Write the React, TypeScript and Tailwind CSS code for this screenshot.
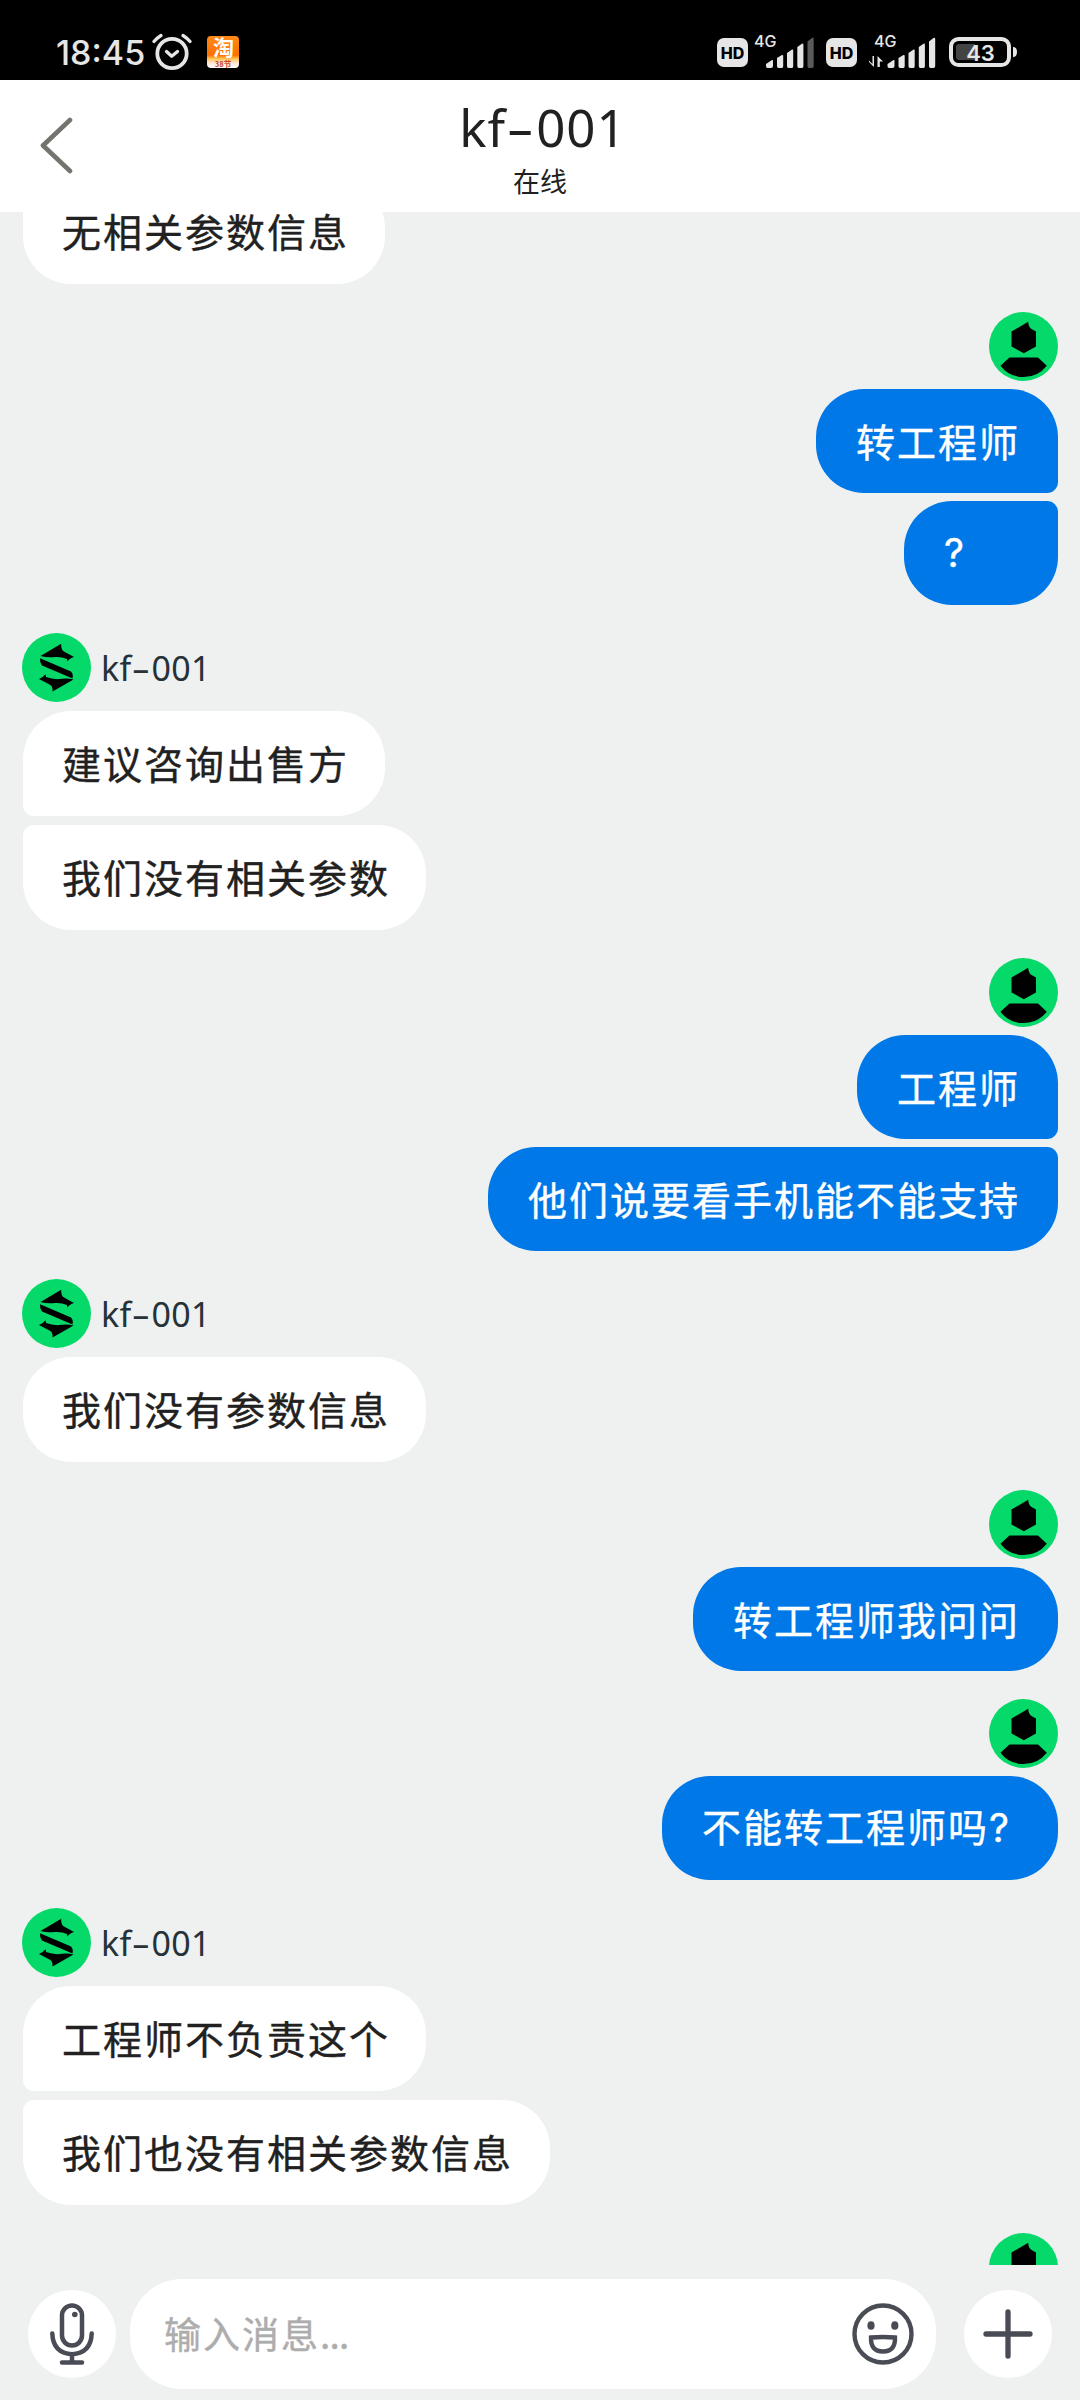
import React from 'react';

type Side = 'agent' | 'me';

interface Message {
  text: string;
  className: string;
}

interface Group {
  id: number;
  side: Side;
  hideHeader?: boolean;
  messages: Message[];
}

const groups: Group[] = [
  { id: 1, side: 'agent', hideHeader: true, messages: [{ text: '无相关参数信息', className: 'w-[362px] rounded-tl-[11px]' }] },
  {
    id: 2,
    side: 'me',
    messages: [
      { text: '转工程师', className: 'w-[242px] rounded-br-[11px]' },
      { text: '?', className: 'w-[154px] rounded-tr-[11px]' },
    ],
  },
  {
    id: 3,
    side: 'agent',
    messages: [
      { text: '建议咨询出售方', className: 'w-[362px] rounded-bl-[11px]' },
      { text: '我们没有相关参数', className: 'w-[403px] rounded-tl-[11px]' },
    ],
  },
  {
    id: 4,
    side: 'me',
    messages: [
      { text: '工程师', className: 'w-[201px] rounded-br-[11px]' },
      { text: '他们说要看手机能不能支持', className: 'w-[570px] rounded-tr-[11px]' },
    ],
  },
  { id: 5, side: 'agent', messages: [{ text: '我们没有参数信息', className: 'w-[403px]' }] },
  { id: 6, side: 'me', messages: [{ text: '转工程师我问问', className: 'w-[365px]' }] },
  { id: 7, side: 'me', messages: [{ text: '不能转工程师吗?', className: 'w-[396px]' }] },
  {
    id: 8,
    side: 'agent',
    messages: [
      { text: '工程师不负责这个', className: 'w-[403px] rounded-bl-[11px]' },
      { text: '我们也没有相关参数信息', className: 'w-[527px] rounded-tl-[11px]' },
    ],
  },
  { id: 9, side: 'me', messages: [] },
];

const AgentAvatar = () => (
  <svg width="69" height="69" viewBox="0 0 69 69" className="shrink-0">
    <circle cx="34.5" cy="34.5" r="34.5" fill="#04d969" />
    <path d="M18.500 23 L39.200 10.800 Q39 17 42 18.500 L52 24 Q47.500 25 45.500 28.500 L45 26 Q39 23.500 33 24 Q25 24.800 18.500 23Z" />
    <path d="M18 25.200 L49 38.500 Q51.500 41 50.500 45.500 L20 32.500 Q17.500 29 18 25.200Z" />
    <path d="M17 46 Q21 44.500 23.500 41.300 L24 44 Q32 47 40 45.800 Q46 45 51.500 46.500 L30.500 58.500 Q31 53 27.500 51.500Z" />
  </svg>
);

const MyAvatar = () => (
  <svg width="69" height="69" viewBox="0 0 69 69" className="shrink-0">
    <circle cx="34.5" cy="34.5" r="34.5" fill="#04d969" />
    <path d="M22.500 19.500 L39.200 9.800 Q39.300 15 42.500 17 L47 19.500 V34.500 L34.800 41.300 L22.500 34.500Z" />
    <path d="M20.500 45.500 H49 L57.800 53.700 Q49 65 34.500 65 Q20 65 11.500 53.700Z" />
  </svg>
);

const HdBadge = () => (
  <div className="w-[31px] h-[29px] rounded-[7px] bg-[#e6e6e6] text-black text-[16px] leading-none font-extrabold flex items-center justify-center">
    HD
  </div>
);

const Signal = ({ weak, data }: { weak?: boolean; data?: boolean }) => (
  <svg width="67" height="40" viewBox="0 -4 67 40" fill="#e6e6e6">
    <text x={data ? 5 : 0} y="12.500" fontSize="16" fontWeight="500" fontFamily="Inter, sans-serif">
      4G
    </text>
    {data && (
      <path d="M3.500 22 V30 L0 26.500 V28 L5 33 V22Z M8.500 33 V22 L14 27.500 H10.800 V33Z" />
    )}
    <g transform={data ? 'translate(18.5 0)' : 'translate(12 0)'}>
      <path d="M0 30 L6 26 Q7 25.500 7 27 V32 Q7 34 5 34 H1.500 Q0 34 0 32Z" />
      <path d="M11 24 L16 21 Q17.200 20.500 17.200 22 V32 Q17.200 34 16 34 H12.500 Q11 34 11 32Z" />
      <path d="M21 19 L26 15.500 Q27.200 15 27.200 16.500 V32 Q27.200 34 26 34 H22.500 Q21 34 21 32Z" />
      <path d="M31.300 13 L36 9.700 Q37.400 9 37.400 11 V32 Q37.400 34 36 34 H32.800 Q31.300 34 31.300 32Z" />
      <path d="M41.500 7.500 L46 4 Q47.700 3 47.700 5 V32 Q47.700 34 46 34 H43 Q41.500 34 41.500 32Z" fill={weak ? '#5a5a5a' : '#e6e6e6'} />
    </g>
  </svg>
);

const StatusBar = () => (
  <div className="h-20 bg-black flex items-start text-[#e6e6e6]">
    <div className="ml-[56px] mt-[34px] w-[95px] text-[34px] leading-[38px] font-medium font-['Inter'] whitespace-nowrap">
      18:45
    </div>
    <svg width="40" height="38" viewBox="0 0 40 38" className="mt-[33px] ml-px" fill="none" stroke="#e6e6e6" strokeLinecap="round" strokeLinejoin="round">
      <circle cx="20" cy="20.500" r="14.700" strokeWidth="3.800" />
      <path d="M14.500 18.500 L19.700 23.200 L25.500 18.500" strokeWidth="3.300" />
      <path d="M2 8.500 Q5 5 9 2.500 M31 2.500 Q35 5 38 8.500" strokeWidth="3.300" />
    </svg>
    <svg width="32" height="32" viewBox="0 0 32 32" className="mt-9 ml-[15px] rounded-[4px]">
      <defs>
        <linearGradient id="tao" x1="0" y1="0" x2="0" y2="1">
          <stop offset="0" stopColor="#ff8a18" />
          <stop offset="0.6" stopColor="#ff7000" />
          <stop offset="0.72" stopColor="#ffc85a" />
          <stop offset="0.85" stopColor="#ffe6dc" />
          <stop offset="1" stopColor="#ffffff" />
        </linearGradient>
      </defs>
      <rect width="32" height="32" fill="url(#tao)" />
      <text x="16.500" y="18.500" textAnchor="middle" fontSize="21" fontWeight="700" fill="#fff" fontFamily="Noto Sans CJK SC, sans-serif">淘</text>
      <text x="16" y="31" textAnchor="middle" fontSize="7.500" fontWeight="700" fill="#c8452b" fontFamily="Noto Sans CJK SC, sans-serif">38节</text>
    </svg>
    <div className="ml-auto mr-[63px] mt-[30px] flex items-start font-['Inter']">
      <div className="mt-2"><HdBadge /></div>
      <div className="ml-[6px] w-[61px]"><Signal weak /></div>
      <div className="ml-[11px] mt-2"><HdBadge /></div>
      <div className="ml-[12px] w-[67px]"><Signal data /></div>
      <div className="ml-[13px] mt-[7px]">
        <svg width="68" height="30" viewBox="0 0 68 30">
          <rect x="2" y="2" width="58" height="26" rx="7.500" fill="none" stroke="#e6e6e6" strokeWidth="4" />
          <path d="M10 7 H26 V23 H10 Q7 23 7 20 V10 Q7 7 10 7Z" fill="#444" />
          <path d="M64 10 Q68 10 68 15 Q68 20 64 20Z" fill="#e6e6e6" />
          <text x="31.500" y="23.500" textAnchor="middle" fontSize="22" fontWeight="600" fill="#e6e6e6" fontFamily="Inter, sans-serif">
            43
          </text>
        </svg>
      </div>
    </div>
  </div>
);

const Header = () => (
  <div className="h-[132px] bg-white flex items-start text-[#212121]">
    <svg width="34" height="58" viewBox="0 0 34 58" className="ml-10 mt-[37px]" fill="none" stroke="#74736e" strokeWidth="4.600" strokeLinecap="round" strokeLinejoin="round">
      <path d="M30 3 L3 28.500 L30 54" />
    </svg>
    <div className="flex-1 mr-[74px] flex flex-col items-center">
      <div className="mt-[15px] h-[64px] pl-[6px] text-[51px] leading-[64px] tracking-[1px] font-['Noto_Sans'] whitespace-nowrap">
        kf<span className="inline-block w-[30px] text-center scale-x-[1.7]">-</span>001
      </div>
      <div className="mt-[2px] text-[27px] leading-[40px]">在线</div>
    </div>
  </div>
);

const MessageGroup = ({ group }: { group: Group }) => {
  const mine = group.side === 'me';
  return (
    <div className={`flex flex-col ${mine ? 'items-end' : 'items-start'}`}>
      {!group.hideHeader && (
        <div className={`flex items-center h-[69px] ${mine ? 'mb-2' : 'mb-[9px]'}`}>
          {mine ? <MyAvatar /> : <AgentAvatar />}
          {!mine && (
            <span className="ml-[10px] text-[34px] leading-[40px] tracking-[0.3px] text-[#263238] font-['Noto_Sans']">
              kf<span className="inline-block w-[20px] text-center scale-x-[1.7]">-</span>001
            </span>
          )}
        </div>
      )}
      <div className={`flex flex-col ${mine ? 'items-end gap-2' : 'items-start gap-[9px] ml-px'}`}>
        {group.messages.map((m) => (
          <div
            key={m.text}
            className={`flex items-center rounded-[48px] pb-[2px] text-[39px] tracking-[2px] whitespace-nowrap [-webkit-text-stroke:0.4px_currentColor] ${
              mine ? 'h-[104px] pl-[40px] bg-[#0078e7] text-white' : 'h-[105px] pl-[39px] bg-white text-[#212121]'
            } ${m.className}`}
          >
            <span>
              {m.text.replace('?', '')}
              {m.text.endsWith('?') && <span className="font-['Inter']">?</span>}
            </span>
          </div>
        ))}
      </div>
    </div>
  );
};

const InputBar = () => (
  <div className="h-[135px] pt-[14px] pl-7 pr-7 flex items-start">
    <button className="mt-[11px] w-[88px] h-[88px] rounded-full bg-white flex items-center justify-center">
      <svg width="44" height="62" viewBox="0 0 44 62" fill="none" stroke="#494b55" strokeWidth="4.500" strokeLinecap="round">
        <rect x="12" y="2.500" width="20" height="40" rx="10" />
        <circle cx="24.800" cy="11.500" r="2.800" fill="#494b55" stroke="none" />
        <path d="M2.300 30.500 Q3 50 22 51.300 Q41 50 41.700 30.500 M22 52 V59.500 M12 59.500 H32" />
      </svg>
    </button>
    <div className="ml-[14px] w-[806px] h-[110px] rounded-[52px] bg-white flex items-center">
      <span className="ml-[34px] flex-1 text-[37px] tracking-[2px] text-[#adadad] [-webkit-text-stroke:0.4px_currentColor]">
        输入消息<span className="tracking-[-0.8px]">...</span>
      </span>
      <svg width="62" height="62" viewBox="0 0 62 62" className="mr-[22px]" fill="none" stroke="#494b55" strokeWidth="4.400">
        <circle cx="31" cy="31" r="28.500" />
        <ellipse cx="19" cy="22.500" rx="3.600" ry="4.300" fill="#494b55" stroke="none" />
        <ellipse cx="42.800" cy="22.500" rx="3.600" ry="4.300" fill="#494b55" stroke="none" />
        <path d="M19 34.500 Q31 33.500 43 34.500 Q43.500 48.500 31 48.500 Q18.500 48.500 19 34.500Z" />
      </svg>
    </div>
    <button className="ml-7 mt-[11px] w-[88px] h-[88px] rounded-full bg-white flex items-center justify-center">
      <svg width="50" height="50" viewBox="0 0 50 50" stroke="#494b55" strokeWidth="5.300" strokeLinecap="round">
        <path d="M3 25 H47 M25 3 V47" />
      </svg>
    </button>
  </div>
);

const App: React.FC = () => {
  return (
    <div className="w-[1080px] h-[2400px] bg-[#eef1f0] overflow-hidden flex flex-col font-['Noto_Sans_CJK_SC','Noto_Sans',sans-serif]">
      <StatusBar />
      <Header />

      {/* Conversation, scrolled part way */}
      <div className="h-[2053px] overflow-hidden pl-[22px] pr-[22px]">
        <div className="-mt-[33px] flex flex-col gap-7">
          {groups.map((g) => (
            <MessageGroup key={g.id} group={g} />
          ))}
        </div>
      </div>

      <InputBar />
    </div>
  );
};

export default App;
